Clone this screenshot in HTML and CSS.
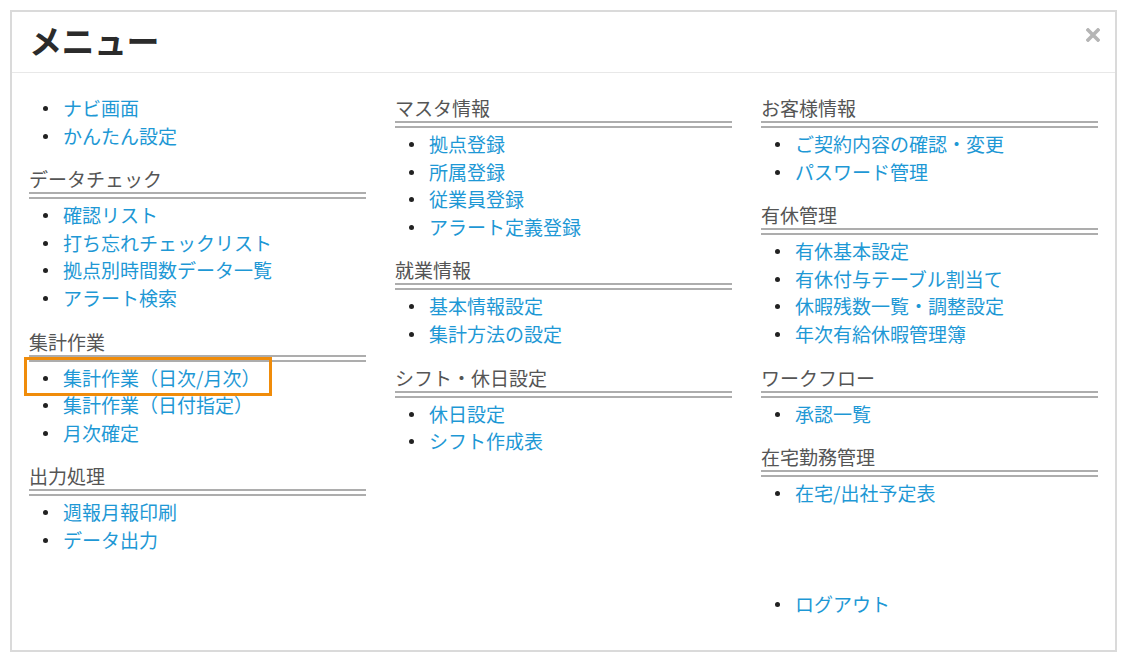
FILE: index.html
```html
<!DOCTYPE html>
<html lang="ja">
<head>
<meta charset="utf-8">
<title>メニュー</title>
<link rel="stylesheet" href="styles.css">
</head>
<body>
<div class="panel">
  <div class="panel-header">
    <h1 class="title">メニュー</h1>
    <button class="close" aria-label="閉じる">
      <svg width="14" height="14" viewBox="0 0 14 14"><path d="M2 2 L12 12 M12 2 L2 12" stroke="#b5b5b5" stroke-width="3.6" stroke-linecap="square"/></svg>
    </button>
  </div>
  <div class="panel-body">
    <div class="col">
      <ul class="menu first">
        <li><a href="#">ナビ画面</a></li>
        <li><a href="#">かんたん設定</a></li>
      </ul>
      <h2 class="group">データチェック</h2>
      <ul class="menu">
        <li><a href="#">確認リスト</a></li>
        <li><a href="#">打ち忘れチェックリスト</a></li>
        <li><a href="#">拠点別時間数データ一覧</a></li>
        <li><a href="#">アラート検索</a></li>
      </ul>
      <h2 class="group">集計作業</h2>
      <ul class="menu">
        <li class="marked"><a href="#">集計作業（日次/月次）</a><span class="highlight"></span></li>
        <li><a href="#">集計作業（日付指定）</a></li>
        <li><a href="#">月次確定</a></li>
      </ul>
      <h2 class="group">出力処理</h2>
      <ul class="menu">
        <li><a href="#">週報月報印刷</a></li>
        <li><a href="#">データ出力</a></li>
      </ul>
    </div>
    <div class="col">
      <h2 class="group top">マスタ情報</h2>
      <ul class="menu">
        <li><a href="#">拠点登録</a></li>
        <li><a href="#">所属登録</a></li>
        <li><a href="#">従業員登録</a></li>
        <li><a href="#">アラート定義登録</a></li>
      </ul>
      <h2 class="group">就業情報</h2>
      <ul class="menu">
        <li><a href="#">基本情報設定</a></li>
        <li><a href="#">集計方法の設定</a></li>
      </ul>
      <h2 class="group">シフト・休日設定</h2>
      <ul class="menu">
        <li><a href="#">休日設定</a></li>
        <li><a href="#">シフト作成表</a></li>
      </ul>
    </div>
    <div class="col">
      <h2 class="group top">お客様情報</h2>
      <ul class="menu">
        <li><a href="#">ご契約内容の確認・変更</a></li>
        <li><a href="#">パスワード管理</a></li>
      </ul>
      <h2 class="group">有休管理</h2>
      <ul class="menu">
        <li><a href="#">有休基本設定</a></li>
        <li><a href="#">有休付与テーブル割当て</a></li>
        <li><a href="#">休暇残数一覧・調整設定</a></li>
        <li><a href="#">年次有給休暇管理簿</a></li>
      </ul>
      <h2 class="group">ワークフロー</h2>
      <ul class="menu">
        <li><a href="#">承認一覧</a></li>
      </ul>
      <h2 class="group">在宅勤務管理</h2>
      <ul class="menu">
        <li><a href="#">在宅/出社予定表</a></li>
      </ul>
      <ul class="menu logout">
        <li><a href="#">ログアウト</a></li>
      </ul>
    </div>
  </div>
</div>
</body>
</html>
```

FILE: styles.css
```css
* { box-sizing: border-box; }
html, body {
  margin: 0;
  padding: 0;
  background: #ffffff;
}
body {
  font-family: "Noto Sans CJK JP", "Noto Sans", sans-serif;
  color: #333;
}
.panel {
  margin: 10px 0 0 10px;
  width: 1107px;
  height: 642px;
  border: 2px solid #dadada;
  background: #fff;
}
.panel-header {
  height: 61px;
  border-bottom: 1px solid #e8e8e8;
  display: flex;
  align-items: center;
  justify-content: space-between;
  padding: 0 16px 0 17px;
}
.title {
  margin: 0;
  font-size: 33px;
  font-weight: 700;
  color: #2b2b2b;
  line-height: 1;
  letter-spacing: -0.5px;
  position: relative;
  top: -2px;
}
.close {
  border: 0;
  background: none;
  padding: 0;
  width: 14px;
  height: 14px;
  margin-right: -1px;
  position: relative;
  top: -7px;
  display: block;
}
.close svg { display: block; }
.panel-body {
  display: grid;
  grid-template-columns: 337px 337px 337px;
  column-gap: 29px;
  padding: 21px 15px 0 17px;
}
.group {
  margin: 16px 0 0 0;
  font-size: 19px;
  font-weight: 400;
  color: #555;
  line-height: 27px;
  border-bottom: 7px double #adadad;
}
.group.top { margin-top: 0; }
.menu {
  list-style: none;
  margin: 2px 0 0 0;
  padding: 0 0 0 34px;
  font-size: 19px;
  line-height: 27.6px;
  color: #222;
}
.menu li { position: relative; }
.menu li::before {
  content: "";
  position: absolute;
  left: -20px;
  top: 12px;
  width: 5px;
  height: 5px;
  border-radius: 50%;
  background: #222;
}
.menu.first { margin-top: 0; }
.menu a {
  color: #1e98d5;
  text-decoration: none;
}
.menu.logout { margin-top: 83px; }
.highlight {
  position: absolute;
  left: -39px;
  top: -7px;
  width: 248px;
  height: 39px;
  border: 3px solid #f08c0a;
  pointer-events: none;
}
```
